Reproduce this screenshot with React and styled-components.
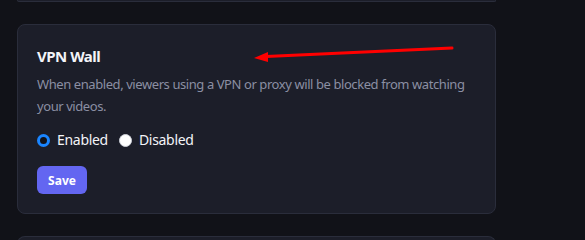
import React, { useState } from "react";
import styled, { createGlobalStyle } from "styled-components";

const Global = createGlobalStyle`
  html, body { margin: 0; padding: 0; background: #111218; }
  body { font-family: "Noto Sans", "Open Sans", sans-serif; }
`;

const Page = styled.div`
  position: relative;
  width: 585px;
  height: 240px;
  overflow: hidden;
  background: #111218;
`;

const Column = styled.div`
  display: flex;
  flex-direction: column;
  gap: 22px;
  padding-left: 17px;
  width: 479px;
`;

const PrevEdge = styled.div`
  height: 1px;
  background: #1c1e29;
  border: 1px solid #2a2d3b;
  border-top: none;
  border-radius: 0 0 8px 8px;
`;

const Card = styled.section`
  background: #1c1e29;
  border: 1px solid #2a2d3b;
  border-radius: 8px;
  padding: 20px 19px 19px;
  display: flex;
  flex-direction: column;
`;

const NextEdge = styled.div`
  height: 10px;
  background: #1c1e29;
  border: 1px solid #2a2d3b;
  border-bottom: none;
  border-radius: 8px 8px 0 0;
`;

const Title = styled.h3`
  margin: 0;
  font-size: 15px;
  line-height: 22px;
  font-weight: 700;
  letter-spacing: -0.5px;
  color: #f3f4f8;
`;

const Desc = styled.p`
  margin: 6px 0 0;
  font-size: 13px;
  line-height: 22px;
  letter-spacing: -0.42px;
  color: #8b8fa3;
`;

const Options = styled.div`
  display: flex;
  align-items: center;
  gap: 11px;
  margin-top: 13px;
`;

const Option = styled.label`
  display: flex;
  align-items: center;
  gap: 7px;
  font-size: 14px;
  line-height: 20px;
  letter-spacing: -0.3px;
  color: #f3f4f8;
`;

const Radio = styled.input`
  appearance: none;
  margin: 0;
  width: 13px;
  height: 13px;
  border-radius: 50%;
  box-sizing: border-box;
  background: ${(p) => (p.checked ? "#111218" : "#ffffff")};
  border: ${(p) => (p.checked ? "3px solid #1a85ff" : "1px solid #cfd2da")};
`;

const SaveButton = styled.button`
  align-self: flex-start;
  margin-top: 16px;
  width: 50px;
  height: 28px;
  border: none;
  border-radius: 6px;
  background: #6366f1;
  color: #ffffff;
  font-family: inherit;
  font-size: 12px;
  font-weight: 700;
`;

const Annotation = styled.svg`
  position: absolute;
  left: 0;
  top: 0;
  pointer-events: none;
`;

export default function App() {
  const [value, setValue] = useState("enabled");
  return (
    <Page>
      <Global />
      <Column>
        <PrevEdge />
        <Card>
          <Title>VPN Wall</Title>
          <Desc>
            When enabled, viewers using a VPN or proxy will be blocked from watching your videos.
          </Desc>
          <Options>
            <Option>
              <Radio type="radio" name="vpn" checked={value === "enabled"} onChange={() => setValue("enabled")} />
              Enabled
            </Option>
            <Option>
              <Radio type="radio" name="vpn" checked={value === "disabled"} onChange={() => setValue("disabled")} />
              Disabled
            </Option>
          </Options>
          <SaveButton>Save</SaveButton>
        </Card>
        <NextEdge />
      </Column>
      <Annotation width="585" height="240" viewBox="0 0 585 240">
        <line x1="452" y1="48" x2="266" y2="56.5" stroke="#ff0000" strokeWidth="3" strokeLinecap="round" />
        <polygon points="254,58 268,52 268,62" fill="#ff0000" />
      </Annotation>
    </Page>
  );
}
